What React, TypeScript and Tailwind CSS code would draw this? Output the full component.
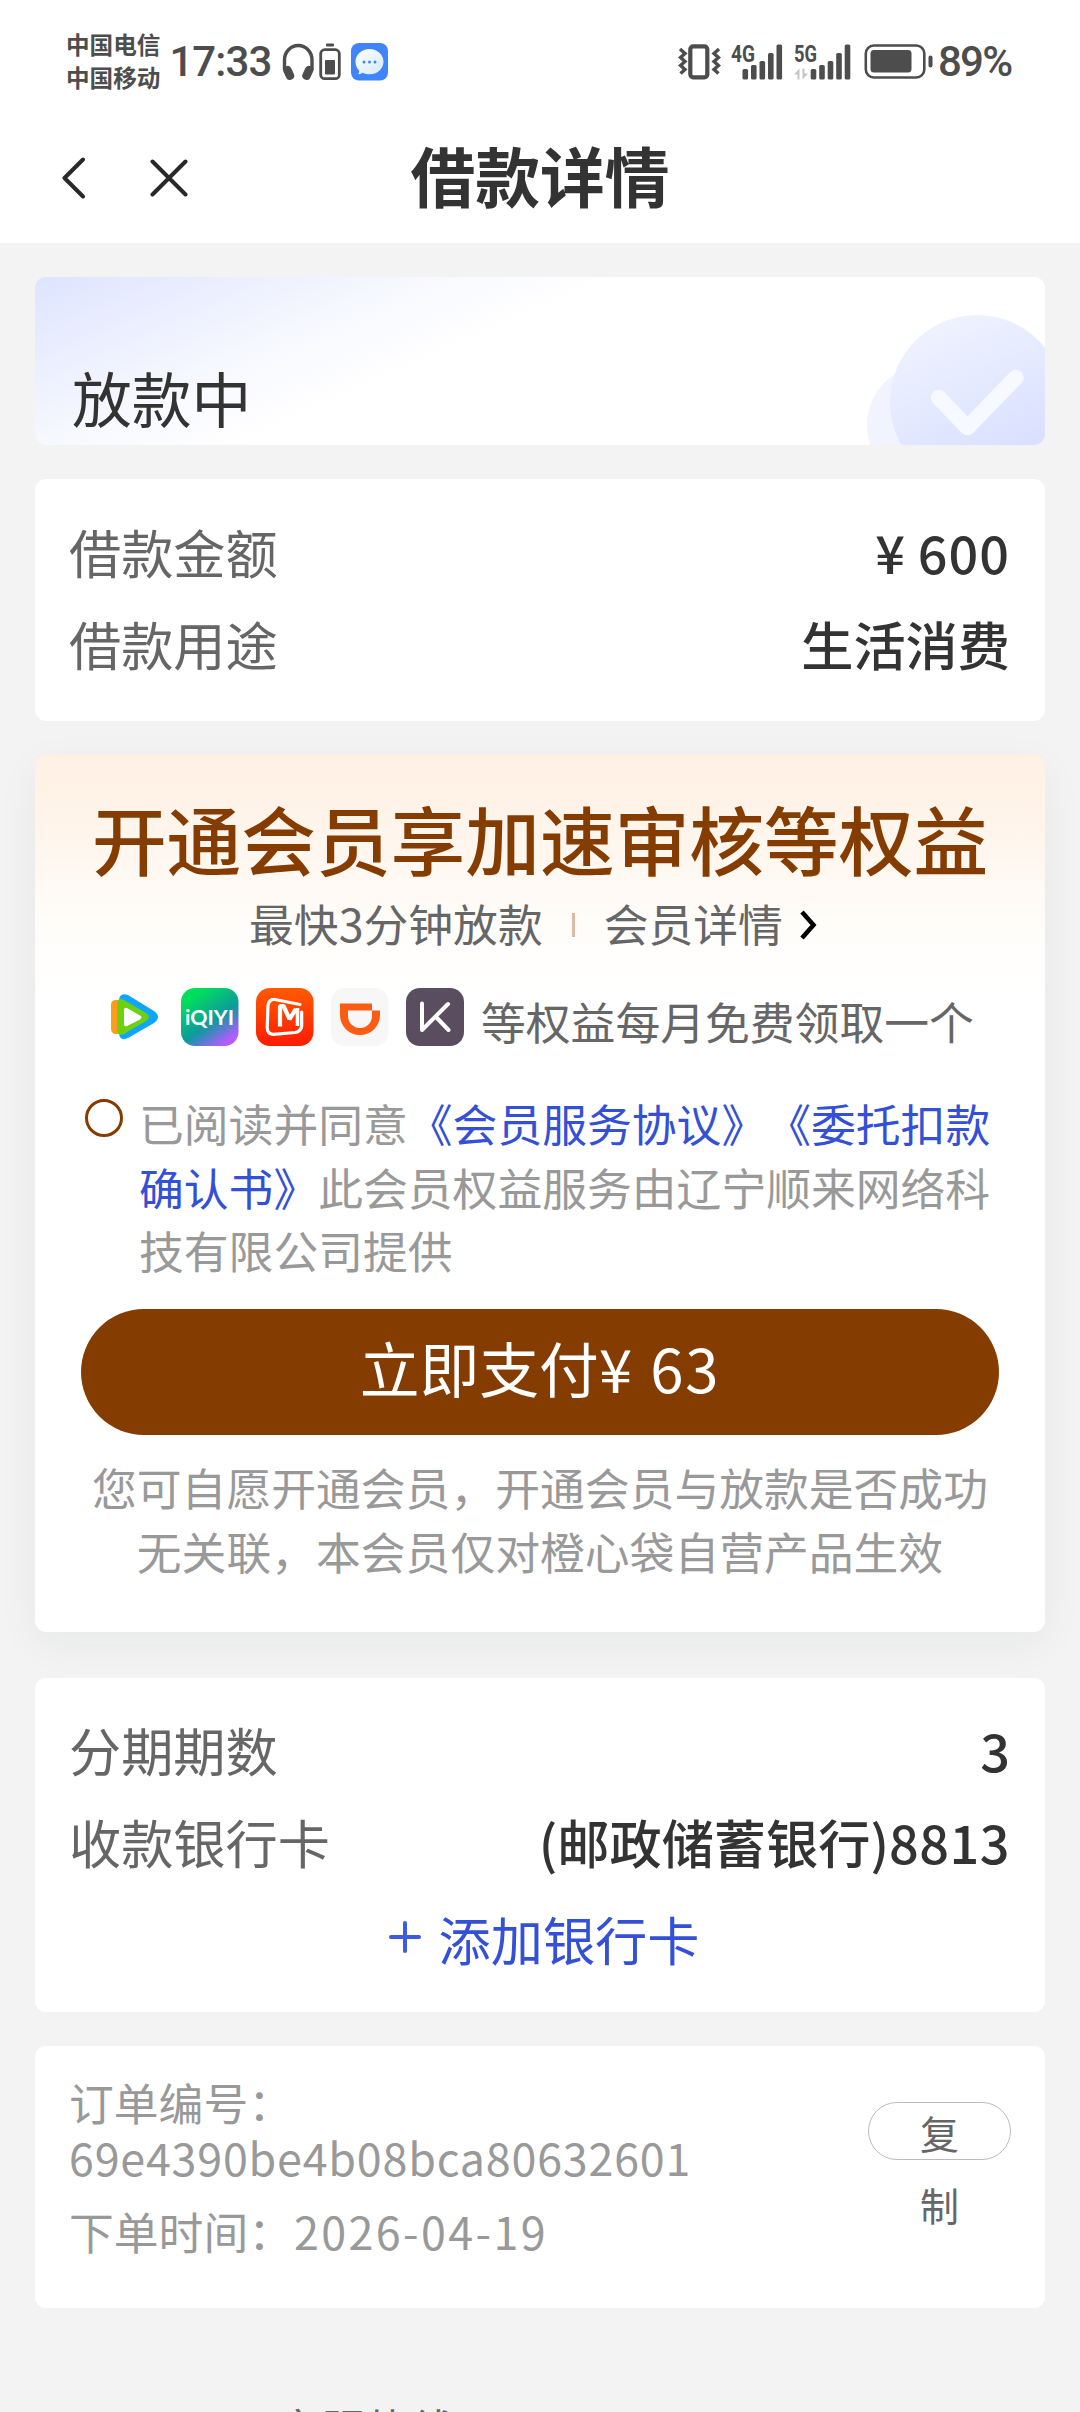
import type { ReactNode } from 'react'

const LINK = 'text-[#3450d6]'

function SignalBars({ x }: { x: number }) {
  const tops = [25, 21, 17, 9, 0.5]
  return (
    <g fill="#4d4d4d">
      {tops.map((top, i) => (
        <rect key={i} x={x + i * 8.5} y={top} width="5.6" height={35.5 - top} rx="1.6" />
      ))}
    </g>
  )
}

function StatusBar() {
  return (
    <div className="flex h-[112px] items-start justify-between pt-[27px] pl-[66px] pr-[68px] text-[#4d4d4d]">
      <div className="flex">
        <div className="text-[23.600px] leading-[33px] font-bold mr-[9px] mt-px">
          <p>中国电信</p>
          <p>中国移动</p>
        </div>
        <span className="font-[Roboto,sans-serif] text-[42px] leading-[70px] font-medium tracking-[-0.900px] w-[112px] whitespace-nowrap">17:33</span>
        <svg className="mt-4 w-9 h-[38px]" viewBox="0 0 36 38" fill="none">
          <path d="M3.500 27V17a12.800 13.500 0 0 1 27.500 0v10" stroke="#4d4d4d" strokeWidth="3.400" />
          <rect x="3.500" y="22.500" width="8.500" height="14.500" rx="4" fill="#4d4d4d" transform="rotate(-24 8 30)" />
          <rect x="22.500" y="22.500" width="8.500" height="14.500" rx="4" fill="#4d4d4d" transform="rotate(24 26.500 30)" />
        </svg>
        <svg className="mt-4 ml-[2px] w-[22px] h-[38px]" viewBox="0 0 22 38" fill="none">
          <rect x="7" y="0.500" width="8" height="3" rx="1" fill="#4d4d4d" />
          <rect x="1.700" y="6.700" width="18.600" height="29" rx="4" stroke="#4d4d4d" strokeWidth="2.800" />
          <rect x="6" y="17" width="10" height="14.500" rx="1" fill="#4d4d4d" />
        </svg>
        <svg className="mt-4 ml-[10px] w-[37px] h-[38px]" viewBox="0 0 37 38">
          <defs>
            <linearGradient id="bubble" x1="0" y1="0" x2="1" y2="1">
              <stop offset="0" stopColor="#fff" />
              <stop offset="1" stopColor="#d5eafe" />
            </linearGradient>
          </defs>
          <rect width="37" height="37.500" rx="8" fill="#3f84fa" />
          <path d="M18.500 6c7.800 0 14 5.600 14 12.700s-6.200 12.600-14 12.600c-2.500 0-4.800-.5-6.800-1.500-1.200.9-2.700 1.500-4.700 1.400 1-.9 1.300-2.300 1.100-3.700-2.300-2.300-3.600-5.300-3.600-8.800C4.500 11.600 10.700 6 18.500 6z" fill="url(#bubble)" />
          <circle cx="13" cy="19" r="1.500" fill="#3f84fa" />
          <circle cx="18.500" cy="19" r="1.500" fill="#3f84fa" />
          <circle cx="24" cy="19" r="1.500" fill="#3f84fa" />
        </svg>
      </div>

      <div className="flex">
        <svg className="mt-[17px] w-[43px] h-9" viewBox="0 0 43 36" fill="none" stroke="#4d4d4d">
          <rect x="12.300" y="2.300" width="17" height="31" rx="3" strokeWidth="4.200" />
          <path d="M2 5l5 4.500-4.500 4 4.500 4-4.500 4 4.500 4-4.500 4" strokeWidth="3.400" />
          <path d="M41 5l-5 4.500 4.500 4-4.500 4 4.500 4-4.500 4 4.500 4" strokeWidth="3.400" />
        </svg>
        <svg className="mt-[11px] ml-[10px] w-[54px] h-[42px]" viewBox="0 -6 54 42">
          <text x="0" y="17.500" fontFamily="Roboto, sans-serif" fontSize="23" fontWeight="700" fill="#4d4d4d" textLength="24" lengthAdjust="spacingAndGlyphs">4G</text>
          <SignalBars x={11.500} />
        </svg>
        <svg className="mt-[11px] ml-[9px] w-[60px] h-[42px]" viewBox="0 -6 60 42">
          <text x="0" y="17.500" fontFamily="Roboto, sans-serif" fontSize="23" fontWeight="700" fill="#4d4d4d" textLength="23" lengthAdjust="spacingAndGlyphs">5G</text>
          <path d="M5.500 24.500v11H3.500v-5H0zM8.500 35.500v-11h2v5H14z" fill="#c6c6c6" />
          <SignalBars x={16.700} />
        </svg>
        <svg className="mt-[17px] ml-[10px] w-[70px] h-9" viewBox="0 0 70 36" fill="none">
          <rect x="1.800" y="1.500" width="58.500" height="32" rx="8" stroke="#4d4d4d" strokeWidth="2.600" />
          <rect x="6.500" y="6" width="41" height="22.500" rx="3.500" fill="#4d4d4d" />
          <rect x="64.500" y="11.500" width="4" height="12" rx="2" fill="#4d4d4d" />
        </svg>
        <span className="ml-[4px] w-[74px] font-[Roboto,sans-serif] text-[42px] leading-[70px] font-medium whitespace-nowrap tracking-[-1.800px]">89%</span>
      </div>
    </div>
  )
}

function NavBar() {
  return (
    <div className="grid h-[131px] grid-cols-[1fr_auto_1fr] items-center">
      <div className="flex items-center pl-[61px] gap-[64px] text-[#282828]">
        <svg className="w-[25px] h-[42px]" viewBox="0 0 25 42" fill="none" stroke="currentColor" strokeWidth="4" strokeLinecap="round" strokeLinejoin="round">
          <path d="M22 2.500L3.500 21 22 39.500" />
        </svg>
        <svg className="w-[38px] h-[38px]" viewBox="0 0 38 38" fill="none" stroke="currentColor" strokeWidth="4" strokeLinecap="round">
          <path d="M2.500 2.500l33 33M35.500 2.500l-33 33" />
        </svg>
      </div>
      <h1 className="text-[64.800px] leading-[80px] font-bold text-[#333] -mt-[8px]">借款详情</h1>
    </div>
  )
}

function Row({ label, children }: { label: string; children: ReactNode }) {
  return (
    <div className="flex justify-between h-[92px] leading-[92px] text-[52.200px]">
      <span className="text-[#666] -ml-px">{label}</span>
      <span className="font-medium text-[#333]">{children}</span>
    </div>
  )
}

function TencentVideoIcon() {
  return (
    <svg className="w-[58px] h-[58px]" viewBox="0 0 58 58">
      <path d="M5 17q0-5 5-5h6v34h-6q-5 0-5-6z" fill="#ff9c1a" />
      <path d="M13 13q0-9 9-6l26 16q8 6 0 12L22 50q-9 4-9-6z" fill="#0fa5fb" />
      <path d="M11 16q0-7 7-4l22 13q6 4 0 8L18 46q-7 3-7-5z" fill="#6fd012" />
      <path d="M18 22q0-3 3-2l13 7.500q3 2 0 4L21 38q-3 1.500-3-2z" fill="#fff" />
    </svg>
  )
}

function IqiyiIcon() {
  return (
    <svg className="w-[58px] h-[58px]" viewBox="0 0 58 58">
      <defs>
        <linearGradient id="iqiyi" x1="0.200" y1="0" x2="0.900" y2="1">
          <stop offset="0.100" stopColor="#00df5c" />
          <stop offset="0.550" stopColor="#0d9a9c" />
          <stop offset="0.720" stopColor="#5a7bd0" />
          <stop offset="0.900" stopColor="#b45cff" />
        </linearGradient>
      </defs>
      <rect width="57.500" height="58" rx="14" fill="url(#iqiyi)" />
      <text x="4" y="36.500" fontFamily="Lato, sans-serif" fontSize="21" fontWeight="700" fill="#fff" textLength="49" lengthAdjust="spacingAndGlyphs">iQIYI</text>
    </svg>
  )
}

function MangoIcon() {
  return (
    <svg className="w-[58px] h-[58px]" viewBox="0 0 58 58" fill="none">
      <defs>
        <linearGradient id="mango" x1="0" y1="0" x2="0" y2="1">
          <stop offset="0" stopColor="#ff5a00" />
          <stop offset="1" stopColor="#ff1c00" />
        </linearGradient>
      </defs>
      <rect width="57.500" height="58" rx="14" fill="url(#mango)" />
      <path d="M44 16.500L19 11.500q-6-.5-7 6l-.8 22q0 6.500 6 6.800l22-1.800q6-1 6.500-7V24" stroke="#fff" strokeWidth="3.200" strokeLinecap="round" />
      <path d="M24 38.500V18l3.500 0 6 13 6.500-10" stroke="#fff" strokeWidth="4.200" strokeLinejoin="bevel" />
      <path d="M41.500 20v18" stroke="#fff" strokeWidth="3.600" />
    </svg>
  )
}

function DidiIcon() {
  return (
    <svg className="w-[58px] h-[58px]" viewBox="0 0 58 58" fill="none">
      <rect width="57.500" height="58" rx="14" fill="#f7f7f7" />
      <path d="M9 15.500h32v7h8v4.500a20 20 0 0 1-40 0z" fill="#fb5b12" />
      <path d="M17 22.500h24v5.500a12 12 0 0 1-24 0z" fill="#f7f7f7" />
    </svg>
  )
}

function KeepIcon() {
  return (
    <svg className="w-[58px] h-[58px]" viewBox="0 0 58 58" fill="none">
      <rect width="58" height="58" rx="14" fill="#5a4d60" />
      <path d="M16 15.500v26.500L42 16M30.500 29.500L42.500 42" stroke="#fff" strokeWidth="4" strokeLinecap="round" strokeLinejoin="round" />
    </svg>
  )
}

function StatusCard() {
  return (
    <section className="relative h-[168px] overflow-hidden rounded-[11px] bg-[linear-gradient(156deg,#dde4ff_0%,#ebeffe_15%,#f8f9ff_29%,#fff_42%)] pl-[37px] pt-[82px]">
      <p className="text-[59.800px] leading-[76px] text-[#333]">放款中</p>
      <svg className="absolute right-0 bottom-0 w-[180px] h-[168px]" viewBox="865 277 180 168" fill="none">
        <defs>
          <linearGradient id="disc" x1="0.200" y1="0" x2="0.600" y2="0.850">
            <stop offset="0" stopColor="#f0f4ff" />
            <stop offset="1" stopColor="#d9e0ff" />
          </linearGradient>
        </defs>
        <circle cx="927" cy="425" r="60" fill="#f1f4ff" />
        <circle cx="977" cy="402" r="87" fill="url(#disc)" />
        <path d="M938.500 397.500l29 30 48.500-50" stroke="#f6f9ff" strokeWidth="15.500" strokeLinecap="round" strokeLinejoin="round" />
      </svg>
    </section>
  )
}

function MemberCard() {
  return (
    <section className="mt-[34px] h-[877px] rounded-[11px] bg-white bg-[linear-gradient(180deg,#fff0e4_0px,#fff6ed_90px,#fffdfa_170px,#fff_240px)] pt-[41px] shadow-[0_12px_44px_rgba(20,30,60,0.05)]">
      <h2 className="h-[84px] text-center text-[74.700px] leading-[84px] font-medium text-[#843c00] whitespace-nowrap">开通会员享加速审核等权益</h2>

      <div className="mt-[13px] flex h-[60px] items-center justify-center text-[44.800px] leading-[60px] text-[#666] pl-[8px]">
        <span>最快3分钟放款</span>
        <i className="mx-[29px] mt-1 h-[24px] w-[3px] bg-[#dfb9a2]" />
        <span>会员详情</span>
        <svg className="ml-[15px] mr-[19px] mt-[3px] w-[22px] h-[32px]" viewBox="0 0 22 32" fill="none">
          <path d="M4 3l11.500 13L4 29" stroke="#000" strokeWidth="4.500" />
        </svg>
      </div>

      <div className="mt-[35px] flex gap-[17px] pl-[71px]">
        <TencentVideoIcon />
        <IqiyiIcon />
        <MangoIcon />
        <DidiIcon />
        <KeepIcon />
        <span className="h-[58px] pt-[4px] text-[44.800px] leading-[58px] text-[#666] whitespace-nowrap">等权益每月免费领取一个</span>
      </div>

      <div className="mt-[45px] flex pl-[50px]">
        <i className="mt-[8px] size-[38px] flex-none rounded-full border-[3px] border-[#843c00]" />
        <p className="ml-[16px] w-[860px] text-[44.800px] leading-[63.500px] text-[#999] [text-spacing-trim:space-all]">
          已阅读并同意<a className={LINK}>《会员服务协议》</a><a className={LINK}>《委托扣款确认书》</a>此会员权益服务由辽宁顺来网络科技有限公司提供
        </p>
      </div>

      <button className="mx-[46px] mt-[27px] block h-[126px] w-[918px] rounded-full bg-[#843c00] text-[59.800px] leading-[116px] pb-[10px] text-white">
        立即支付¥<span className="ml-[3px] tracking-[1.800px]"> 63</span>
      </button>

      <p className="mt-[20px] text-center text-[44.800px] leading-[64px] text-[#999] [text-spacing-trim:space-all]">
        您可自愿开通会员，开通会员与放款是否成功
        <br />
        无关联，本会员仅对橙心袋自营产品生效
      </p>
    </section>
  )
}

function OrderCard() {
  return (
    <section className="mt-[34px] flex h-[262px] justify-between rounded-[11px] bg-white pl-[34px] pr-[34px]">
      <div className="pt-[28px] text-[44.800px] leading-[55px] text-[#999]">
        <p>订单编号：</p>
        <p className="tracking-[0.800px]">69e4390be4b08bca80632601</p>
        <p className="mt-[19px]">下单时间：<span className="ml-px tracking-[2.400px]">2026-04-19</span></p>
      </div>
      <button className="mt-[56px] h-[58px] w-[143px] rounded-full border border-[#bbb] px-[50px] text-[39px] leading-[72px] text-[#666]">
        <span className="-mt-[10px] block h-[60px]">复制</span>
      </button>
    </section>
  )
}

export default function App() {
  return (
    <div className="h-[2412px] w-[1080px] overflow-hidden bg-[#f3f3f3] font-['Noto_Sans_CJK_SC',sans-serif]">
      <header className="bg-white">
        <StatusBar />
        <NavBar />
      </header>

      <main className="px-[35px] pt-[34px]">
        <StatusCard />

        <section className="mt-[34px] h-[242px] rounded-[11px] bg-white px-[35px] pt-[26px]">
          <Row label="借款金额">¥<span className="tracking-[1px]"> 600</span></Row>
          <Row label="借款用途">生活消费</Row>
        </section>

        <MemberCard />

        <section className="mt-[46px] h-[334px] rounded-[11px] bg-white px-[35px] pt-[25px]">
          <Row label="分期期数">3</Row>
          <Row label="收款银行卡">(邮政储蓄银行)<span className="tracking-[0.500px]">8813</span></Row>
          <div className={`flex h-[102px] items-center justify-center pl-[8px] text-[52.200px] leading-[102px] ${LINK}`}>
            <svg className="mr-[18px] -mt-[3px] w-[32px] h-[32px]" viewBox="0 0 32 32" stroke="#3d5be0" strokeWidth="4" strokeLinecap="round">
              <path d="M16 2v28M2 16h28" />
            </svg>
            添加银行卡
          </div>
        </section>

        <OrderCard />

        <p className="mt-[92px] pl-[241px] text-[44.800px] leading-[55px] text-[#666]">客服热线</p>
      </main>
    </div>
  )
}
